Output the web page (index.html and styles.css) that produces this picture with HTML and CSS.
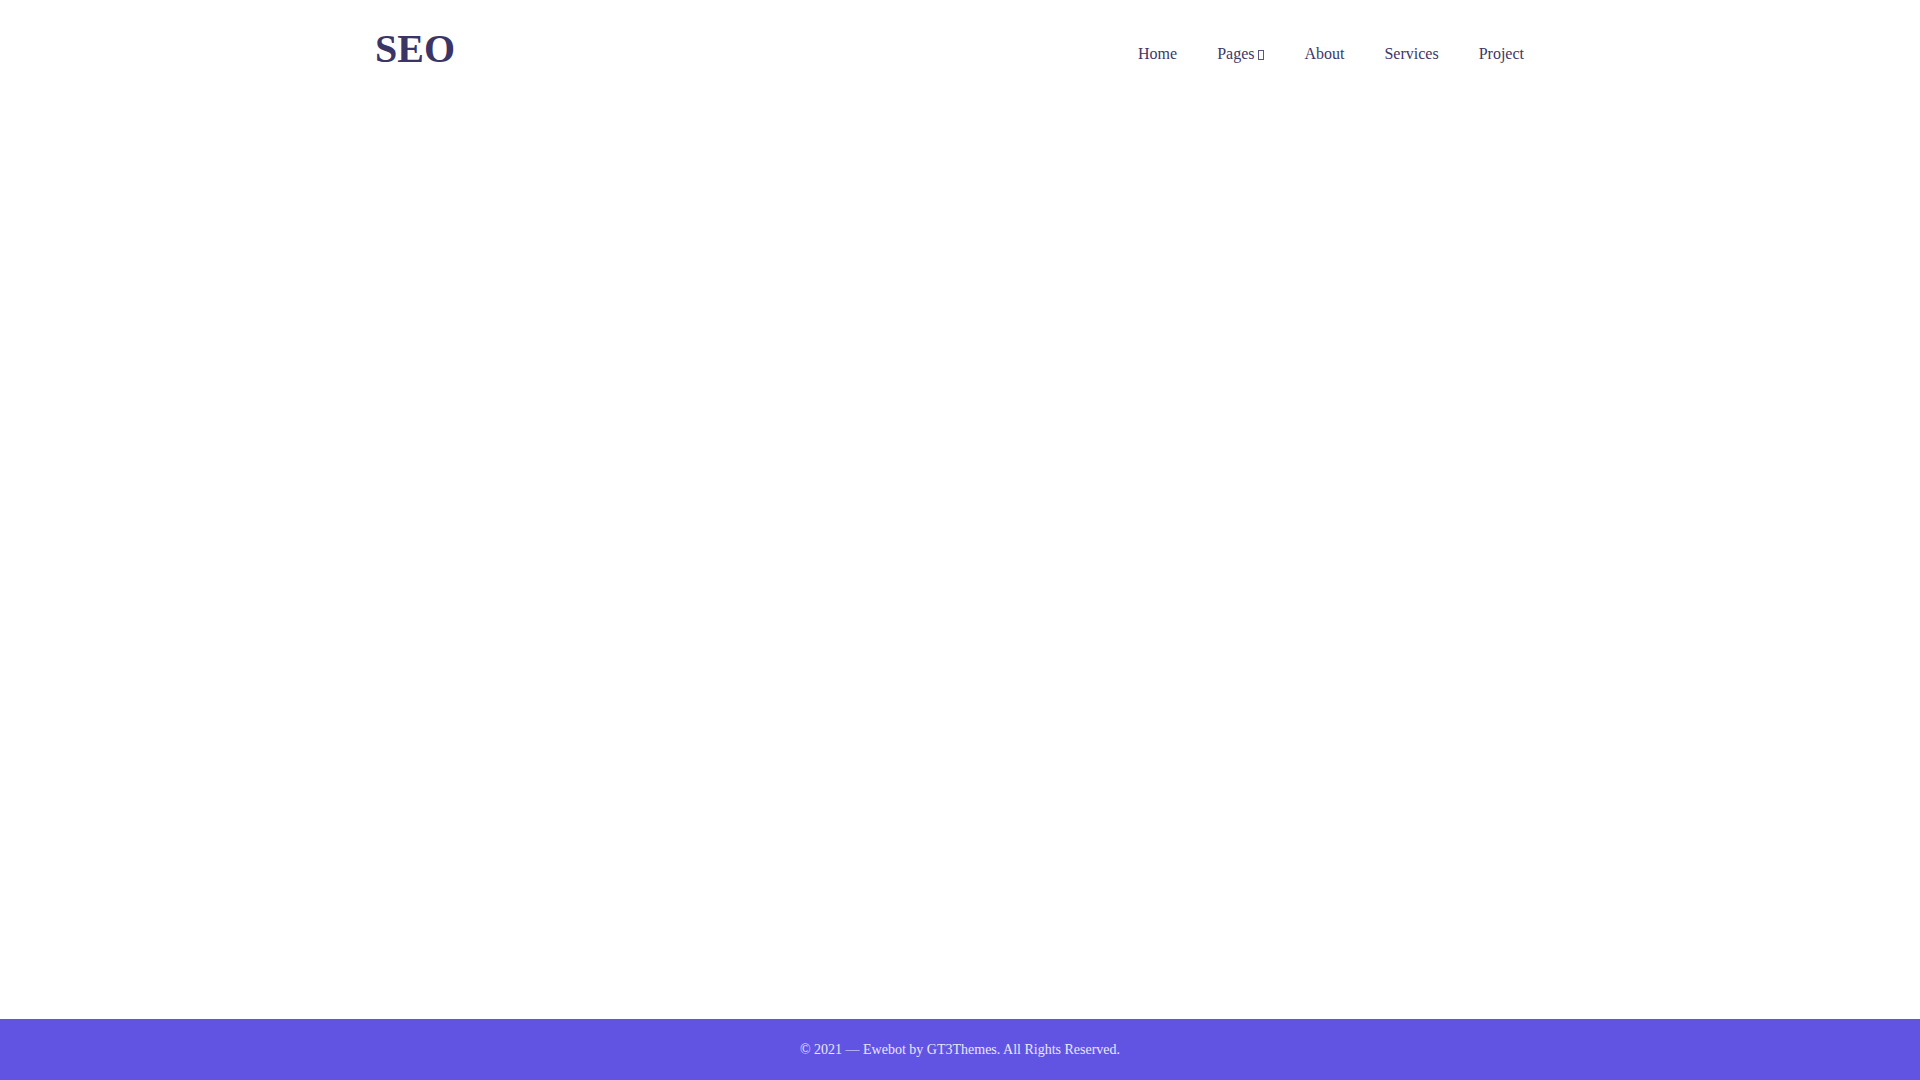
FILE: index.html
```html
<!DOCTYPE html>
<html lang="en">
<head>
<meta charset="utf-8">
<title>SEO</title>
<link rel="stylesheet" href="styles.css">
</head>
<body>
<div class="page">
  <header class="site-header">
    <div class="container header-inner">
      <a class="logo" href="#">SEO</a>
      <nav class="main-nav">
        <a class="nav-item" href="#">Home</a>
        <a class="nav-item" href="#">Pages <span class="tofu"></span></a>
        <a class="nav-item" href="#">About</a>
        <a class="nav-item" href="#">Services</a>
        <a class="nav-item" href="#">Project</a>
      </nav>
    </div>
  </header>
  <main class="site-main"></main>
  <footer class="site-footer">
    <p class="copyright">© 2021 — Ewebot by GT3Themes. All Rights Reserved.</p>
  </footer>
</div>
</body>
</html>
```
FILE: styles.css
```css
html, body {
  margin: 0;
  padding: 0;
}
body {
  font-family: "Liberation Serif", "Times New Roman", serif;
  background: #ffffff;
  color: #3c3768;
}
.page {
  display: flex;
  flex-direction: column;
  min-height: 100vh;
}
.container {
  width: 1170px;
  margin: 0 auto;
}
.site-header {
  padding-top: 20px;
}
.header-inner {
  display: flex;
  justify-content: space-between;
  align-items: flex-start;
}
.logo {
  font-size: 40px;
  line-height: 57px;
  font-weight: 700;
  color: #3b3566;
  text-decoration: none;
}
.main-nav {
  display: flex;
  padding-top: 22px;
  margin-right: 1px;
}
.nav-item {
  font-size: 16px;
  line-height: 24px;
  padding: 0 20px;
  color: #3c3768;
  text-decoration: none;
}
.tofu {
  display: inline-block;
  width: 4px;
  height: 8px;
  border: 1px solid #5a5580;
  vertical-align: -1px;
}
.site-main {
  flex: 1;
}
.site-footer {
  height: 61px;
  background: #6254e3;
  display: flex;
  align-items: center;
  justify-content: center;
}
.copyright {
  margin: 0;
  font-size: 14px;
  line-height: 20px;
  color: #e9e7fb;
}
```
